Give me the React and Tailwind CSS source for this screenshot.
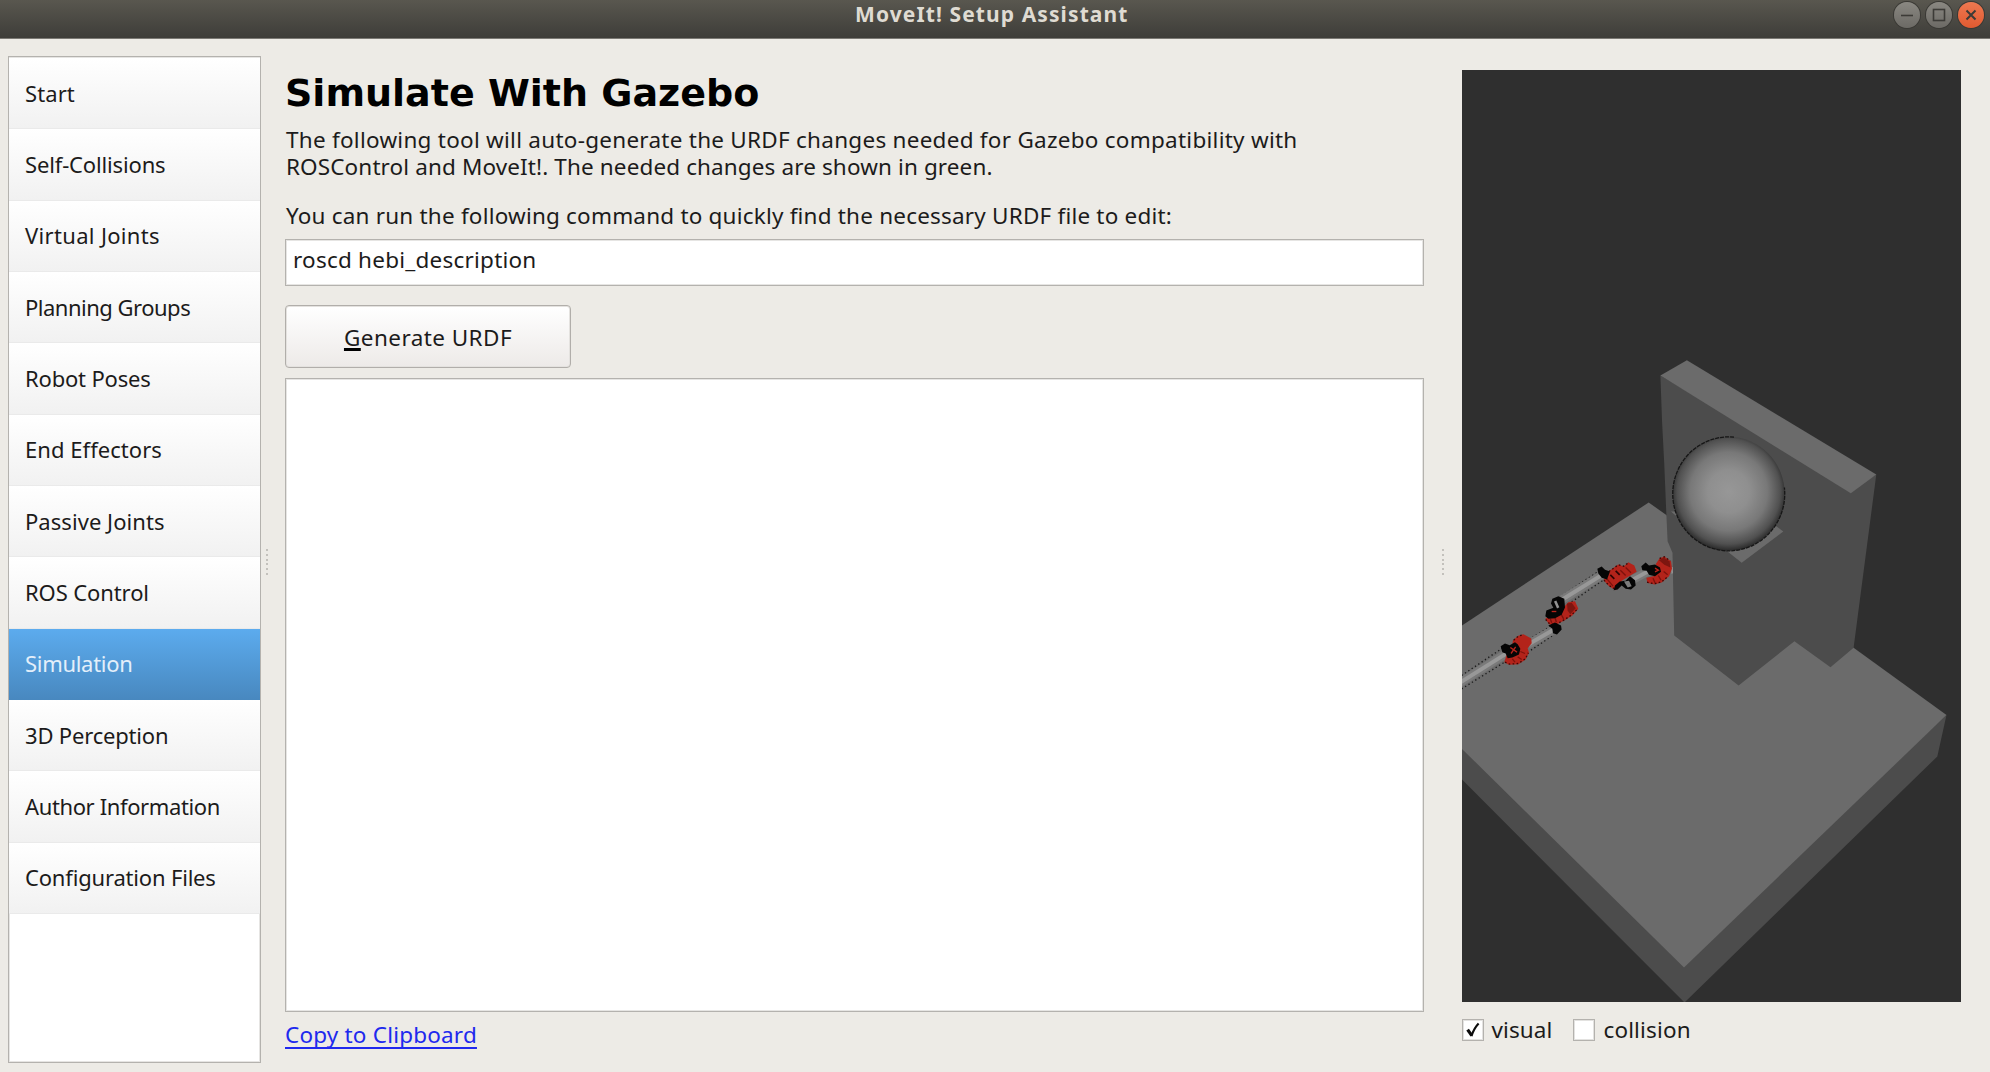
import React from "react";

const steps = [
  { label: "Start", tracking: "tracking-[0.1px]" },
  { label: "Self-Collisions", tracking: "tracking-[-0.15px]" },
  { label: "Virtual Joints", tracking: "tracking-[0.33px]" },
  { label: "Planning Groups", tracking: "tracking-[-0.5px]" },
  { label: "Robot Poses", tracking: "tracking-[-0.18px]" },
  { label: "End Effectors", tracking: "tracking-[0.05px]" },
  { label: "Passive Joints", tracking: "tracking-[0.05px]" },
  { label: "ROS Control", tracking: "tracking-[-0.1px]" },
  { label: "Simulation", tracking: "tracking-[-0.3px]", active: true },
  { label: "3D Perception", tracking: "tracking-[-0.18px]" },
  { label: "Author Information", tracking: "tracking-[-0.38px]" },
  { label: "Configuration Files", tracking: "tracking-[-0.18px]" },
];

function WindowButton({ close, children }) {
  return (
    <span
      className={
        "flex size-[26px] items-center justify-center rounded-full shadow-[0_0_0_1px_#3a3935] " +
        (close ? "bg-linear-to-b from-[#ee7850] to-[#e05a30]" : "bg-linear-to-b from-[#8a8882] to-[#6c6a65]")
      }
    >
      <svg width="26" height="26" viewBox="0 0 26 26" fill="none" stroke="#3c3b37" strokeWidth="1.6">
        {children}
      </svg>
    </span>
  );
}

function TitleBar() {
  return (
    <header className="grid h-[39px] shrink-0 grid-cols-[855px_auto_1fr] border-b border-[#7b7974] bg-linear-to-b from-[#59574f] to-[#3e3d39]">
      <span />
      <h1 className="mt-px text-[21px] leading-[27px] font-bold tracking-[1.1px] text-[#dfdbd2]">MoveIt! Setup Assistant</h1>
      <div className="flex justify-end gap-[6px] pt-[2px] pr-[6px]">
        <WindowButton>
          <path d="M7 13.5H19" />
        </WindowButton>
        <WindowButton>
          <rect x="7.5" y="7.5" width="11" height="11" />
        </WindowButton>
        <WindowButton close>
          <path d="M8.5 8.5L17.5 17.5M17.5 8.5L8.5 17.5" strokeWidth="2" />
        </WindowButton>
      </div>
    </header>
  );
}

function Sidebar() {
  return (
    <nav className="mt-[17px] h-[1007px] border border-[#b4b2ae] bg-white pt-px shadow-[inset_0_0_0_1px_#e6e5e3]">
      {steps.map((s) => (
        <div
          key={s.label}
          className={
            "flex h-[71.35px] items-center pb-px pl-[16px] text-[22px] whitespace-nowrap " +
            s.tracking +
            (s.active
              ? " bg-linear-to-b from-[#5cabee] to-[#4888bf] text-[#e3effa]"
              : " bg-linear-to-b from-white to-[#f1f1f1] shadow-[inset_0_-1px_0_#eaeaea]")
          }
        >
          {s.label}
        </div>
      ))}
    </nav>
  );
}

function Grip() {
  return (
    <div className="flex flex-col items-center gap-[2.75px] pt-[510px]">
      {[0, 1, 2, 3, 4, 5].map((i) => (
        <span key={i} className="size-[2px] bg-[#c3c1bc]" />
      ))}
    </div>
  );
}

function RobotArm() {
  return (
    <g transform="translate(1455 540) scale(0.33333)">
      <g fill="none" stroke="#1c1c1c" strokeWidth="4" strokeDasharray="4 8">
        <path d="M20 408L142 326M20 448L152 366" />
        <path d="M222 300L288 260M228 332L296 286" />
        <path d="M322 168L428 97M340 194L446 121" />
      </g>
      <g fill="none" stroke="#7a7a7a" strokeWidth="26">
        <path d="M14 430L156 341" />
        <path d="M218 316L302 267" />
        <path d="M322 180L446 103" />
        <path d="M530 122L590 90" />
      </g>
      <g fill="none" stroke="#989898" strokeWidth="12">
        <path d="M14 430L156 341" />
        <path d="M218 316L302 267" />
        <path d="M322 180L446 103" />
        <path d="M530 122L590 90" />
      </g>
      <path d="M648 84L656 82V98L650 104Z" fill="#999" />

      <g fill="#b3231a">
        <path d="M174 302L190 289L205 284L229 297L230 311L218 326L222 340L212 360L190 374L162 376L148 368L154 348L168 340Z" />
        <path d="M325 205L340 188L360 185L370 208L352 228L328 243L300 257L282 254L271 238L290 225Z" />
        <path d="M460 96L490 75L506 81L520 68L538 78L545 97L526 108L500 124L482 152L462 140L446 122Z" />
        <path d="M602 74L614 56L628 51L648 65L651 88L642 110L620 129L598 135L577 130L574 115L595 110L617 95Z" />
      </g>
      <g fill="#7d1610">
        <path d="M336 192L350 190L362 206L346 224L338 214Z" />
        <path d="M612 62L626 54L644 66L646 84L628 76Z" />
      </g>
      <g fill="none" stroke="#3d0805" strokeWidth="4" strokeDasharray="5 7">
        <path d="M150 368L164 374L190 372L211 358L220 340M176 302L190 290L205 285" />
        <path d="M272 240L284 253L302 255L328 241L350 226L368 208" />
        <path d="M447 122L462 138L482 150M462 96L490 76L506 80L520 70" />
        <path d="M576 128L598 133L620 127L640 110M614 57L628 52L646 64" />
      </g>
      <g fill="none" stroke="#7d120c" strokeWidth="4">
        <path d="M196 336L210 342M188 352L200 360M172 358L180 368" />
        <path d="M318 224L326 238M300 234L304 248M286 238L290 250" />
        <path d="M454 116L474 140M496 92L512 108M512 84L528 100" />
        <path d="M626 96L638 106M610 108L618 122M594 116L600 130" />
      </g>
      <g fill="none" stroke="#2b0403" strokeWidth="5">
        <path d="M466 106L478 118M482 94L494 106" />
      </g>
      <g fill="#050505">
        <path d="M137 320L150 312L164 317L180 308L188 314L196 328L192 345L172 354L158 356L152 342L142 338Z" />
        <path d="M292 178L310 170L328 178L330 204L320 226L300 236L280 238L271 230L274 213L295 205L288 192Z" />
        <path d="M280 258L300 249L318 258L320 270L306 285L294 281L292 268Z" />
        <path d="M427 88L440 81L450 91L465 96L456 120L440 115L430 102Z" />
        <path d="M476 152L480 138L494 126L512 124L525 110L540 122L542 138L528 150L512 148L500 138L488 150Z" />
        <path d="M559 80L572 69L582 78L600 75L615 84L618 97L600 110L582 106L575 94L562 92Z" />
      </g>
      <g fill="none" stroke="#b8241b" strokeWidth="4">
        <path d="M166 324L186 338M182 322L168 342" />
        <path d="M290 216H304" />
        <path d="M600 86L610 92L600 97" />
      </g>
      <path d="M297 186L304 183L313 203L306 207Z" fill="#929292" />
      <path d="M507 126L522 124L530 140L518 144Z" fill="#7c7c7c" />
    </g>
  );
}

function Viewport() {
  return (
    <svg
      className="block h-[932px] w-[499px] bg-[#2f2f2f]"
      viewBox="1462 70.5 499 932"
      preserveAspectRatio="none"
    >
      <defs>
        <radialGradient id="ball" cx="0.5" cy="0.48" r="0.53">
          <stop offset="0" stopColor="#979797" />
          <stop offset="0.35" stopColor="#8f8f8f" />
          <stop offset="0.65" stopColor="#787878" />
          <stop offset="0.87" stopColor="#505050" />
          <stop offset="1" stopColor="#222" />
        </radialGradient>
      </defs>
      <path d="M1455 735L1684 960L1946.5 715.5L1937.3 757L1684.5 1003L1455 773Z" fill="#4c4c4c" />
      <path d="M1455 630.5L1648.7 503L1853.6 648.3L1946.5 715.5L1684 968L1455 742.5Z" fill="#6b6b6b" />
      <RobotArm />
      <path
        d="M1660.4 376L1850.8 490L1876.3 475L1853.6 648.3L1830.5 667.7L1794.4 641.7L1738.6 686L1674.2 636L1672.5 553.3L1667.6 541.7L1666.3 513.3L1664.2 463.3L1662.1 423Z"
        fill="#4c4c4c"
      />
      <path d="M1660.4 376L1686.9 360.7L1876.3 475L1850.8 493.7Z" fill="#6b6b6b" />
      <path d="M1725 550L1741.7 563.3L1783.3 532L1770 522ZM1671 512H1676L1678 518Z" fill="#6b6b6b" />
      <ellipse cx="1728.7" cy="494.3" rx="56" ry="57" fill="url(#ball)" />
      <path d="M1734 437.6A56 57 0 1 0 1784.4 488" fill="none" stroke="#161616" strokeWidth="1.3" strokeDasharray="4 1" />
    </svg>
  );
}

function CheckOption({ label, checked, tracking }) {
  return (
    <label className={"flex items-center gap-[8px] text-[22.5px] leading-[27px] " + tracking}>
      <span className="flex size-[22px] items-center justify-center border border-[#b4b2ae] bg-white shadow-[inset_0_0_0_1px_#e3e2e0]">
        {checked && (
          <svg width="18" height="18" viewBox="0 0 18 18" fill="none" stroke="#0c0c0c">
            <path d="M3.6 8.6L7.8 14.6" strokeWidth="3.2" />
            <path d="M7.4 15.2C9 10.5 11.3 6 14.6 2.6" strokeWidth="2.2" />
          </svg>
        )}
      </span>
      {label}
    </label>
  );
}

export default function App() {
  return (
    <div className="flex h-[1072px] w-[1990px] flex-col overflow-hidden bg-[#edebe6] font-['Noto_Sans',sans-serif] text-[#1c1b1b]">
      <TitleBar />
      <div className="grid grow grid-cols-[253px_24px_1138.5px_38.5px_500px] pl-[8px]">
        <Sidebar />
        <div className="flex justify-start pl-[5px]">
          <Grip />
        </div>

        <main className="pt-[31px]">
          <h2 className="font-['DejaVu_Sans',sans-serif] text-[38px] leading-[46px] font-bold text-black">Simulate With Gazebo</h2>
          <p className="mt-[10px] pl-px text-[22.5px] leading-[27px] whitespace-nowrap">
            <span className="tracking-[0.26px]">The following tool will auto-generate the URDF changes needed for Gazebo compatibility with</span>
            <br />
            <span className="tracking-[0.12px]">ROSControl and MoveIt!. The needed changes are shown in green.</span>
          </p>
          <p className="mt-[22px] pl-px text-[22.5px] leading-[27px] tracking-[0.2px] whitespace-nowrap">
            You can run the following command to quickly find the necessary URDF file to edit:
          </p>
          <div className="mt-[10px] h-[47px] border border-[#b4b2ae] bg-white pt-[6px] pl-[7px] text-[22.5px] leading-[27px] tracking-[0.23px] shadow-[inset_0_0_0_1px_#e6e5e3]">
            roscd hebi_description
          </div>
          <button className="mt-[19px] block h-[63px] w-[286px] rounded-[4px] border border-[#b1aeaa] bg-linear-to-b from-white to-[#edeae8] pt-[2px] text-[22.5px] leading-[27px] tracking-[0.44px] shadow-[inset_0_0_0_1px_#e4e2df]">
            <span className="underline decoration-black decoration-[3px] underline-offset-[2px]">G</span>enerate URDF
          </button>
          <div className="mt-[10px] h-[634px] border border-[#b4b2ae] bg-white shadow-[inset_0_0_0_1px_#e6e5e3]" />
          <a className="mt-[9px] block w-fit text-[22.5px] leading-[27px] tracking-[0.2px] text-[#2029ee] underline decoration-2 underline-offset-[4px] [text-decoration-skip-ink:none]">
            Copy to Clipboard
          </a>
        </main>

        <div className="flex justify-start pl-[18.5px]">
          <Grip />
        </div>

        <section className="-ml-[0.5px] pt-[31px]">
          <Viewport />
          <div className="mt-[14px] flex gap-[21px]">
            <CheckOption label="visual" checked tracking="tracking-[0.1px]" />
            <CheckOption label="collision" tracking="tracking-[0.15px]" />
          </div>
        </section>
      </div>
    </div>
  );
}
